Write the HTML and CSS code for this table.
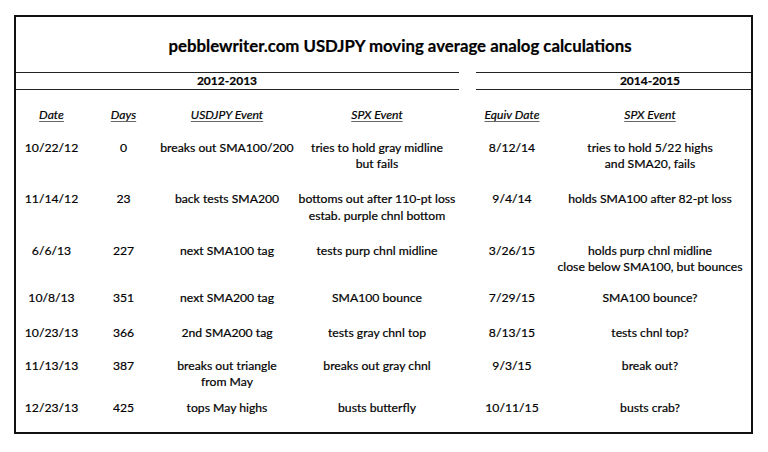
FILE: index.html
```html
<!DOCTYPE html>
<html>
<head>
<meta charset="utf-8">
<link rel="stylesheet" href="styles.css">
</head>
<body>
<div class="sheet">
  <h1 class="title">pebblewriter.com USDJPY moving average analog calculations</h1>
  <div class="periods">
    <div class="period period-a"><span class="period-label">2012-2013</span></div>
    <div class="period period-b"><span class="period-label">2014-2015</span></div>
  </div>
  <div class="table">
    <div class="row head">
      <div class="cell"><span class="hd">Date</span></div>
      <div class="cell"><span class="hd">Days</span></div>
      <div class="cell"><span class="hd">USDJPY Event</span></div>
      <div class="cell"><span class="hd">SPX Event</span></div>
      <div class="cell"><span class="hd">Equiv Date</span></div>
      <div class="cell"><span class="hd">SPX Event</span></div>
    </div>
    <div class="row r1">
      <div class="cell">10/22/12</div>
      <div class="cell">0</div>
      <div class="cell">breaks out SMA100/200</div>
      <div class="cell">tries to hold gray midline<br>but fails</div>
      <div class="cell">8/12/14</div>
      <div class="cell">tries to hold 5/22 highs<br>and SMA20, fails</div>
    </div>
    <div class="row r2">
      <div class="cell">11/14/12</div>
      <div class="cell">23</div>
      <div class="cell">back tests SMA200</div>
      <div class="cell">bottoms out after 110-pt loss<br>estab. purple chnl bottom</div>
      <div class="cell">9/4/14</div>
      <div class="cell">holds SMA100 after 82-pt loss</div>
    </div>
    <div class="row r3">
      <div class="cell">6/6/13</div>
      <div class="cell">227</div>
      <div class="cell">next SMA100 tag</div>
      <div class="cell">tests purp chnl midline</div>
      <div class="cell">3/26/15</div>
      <div class="cell">holds purp chnl midline<br>close below SMA100, but bounces</div>
    </div>
    <div class="row r4">
      <div class="cell">10/8/13</div>
      <div class="cell">351</div>
      <div class="cell">next SMA200 tag</div>
      <div class="cell">SMA100 bounce</div>
      <div class="cell">7/29/15</div>
      <div class="cell">SMA100 bounce?</div>
    </div>
    <div class="row r5">
      <div class="cell">10/23/13</div>
      <div class="cell">366</div>
      <div class="cell">2nd SMA200 tag</div>
      <div class="cell">tests gray chnl top</div>
      <div class="cell">8/13/15</div>
      <div class="cell">tests chnl top?</div>
    </div>
    <div class="row r6">
      <div class="cell">11/13/13</div>
      <div class="cell">387</div>
      <div class="cell">breaks out triangle<br>from May</div>
      <div class="cell">breaks out gray chnl</div>
      <div class="cell">9/3/15</div>
      <div class="cell">break out?</div>
    </div>
    <div class="row r7">
      <div class="cell">12/23/13</div>
      <div class="cell">425</div>
      <div class="cell">tops May highs</div>
      <div class="cell">busts butterfly</div>
      <div class="cell">10/11/15</div>
      <div class="cell">busts crab?</div>
    </div>
  </div>
</div>
</body>
</html>
```
FILE: styles.css
```css
html, body {
  margin: 0;
  padding: 0;
  background: #fff;
}
body {
  font-family: Lato, "Open Sans", sans-serif;
  color: #000;
  -webkit-text-stroke: 0.2px #000;
}
.sheet {
  box-sizing: border-box;
  margin: 15px 0 0 14px;
  width: 739px;
  height: 419px;
  border: 2px solid #111;
}
.title {
  margin: 0;
  height: 54px;
  box-sizing: border-box;
  padding: 18px 0 0 33px;
  font-size: 16.8px;
  line-height: 22px;
  font-weight: 700;
  text-align: center;
}
.periods {
  display: flex;
  margin-top: 1px;
}
.period {
  display: grid;
  height: 16px;
  border-top: 1px solid #222;
  border-bottom: 1px solid #222;
  font-size: 12px;
  font-weight: 700;
  line-height: 16px;
}
.period-a {
  width: 443px;
  grid-template-columns: 144px 134px 1fr;
}
.period-b {
  flex: 1;
  margin-left: 17px;
  grid-template-columns: 88px 172px 1fr;
}
.period-label {
  grid-column: 2;
  text-align: center;
}
.table {
  padding-top: 17px;
  font-size: 12.2px;
  line-height: 16.6px;
}
.row {
  display: grid;
  grid-template-columns: 71px 73px 134px 166px 104px 172px;
}
.cell {
  display: flex;
  flex-direction: column;
  align-items: center;
  text-align: center;
  white-space: nowrap;
}
.hd {
  font-style: italic;
  text-decoration: underline;
  text-decoration-color: #666;
  text-underline-offset: 2px;
}
.head { height: 32.7px; }
.r1 { height: 51.3px; }
.r2 { height: 51.7px; }
.r3 { height: 47.6px; }
.r4 { height: 34.4px; }
.r5 { height: 33px; }
.r6 { height: 42px; }
.r7 { height: 20px; }
```
